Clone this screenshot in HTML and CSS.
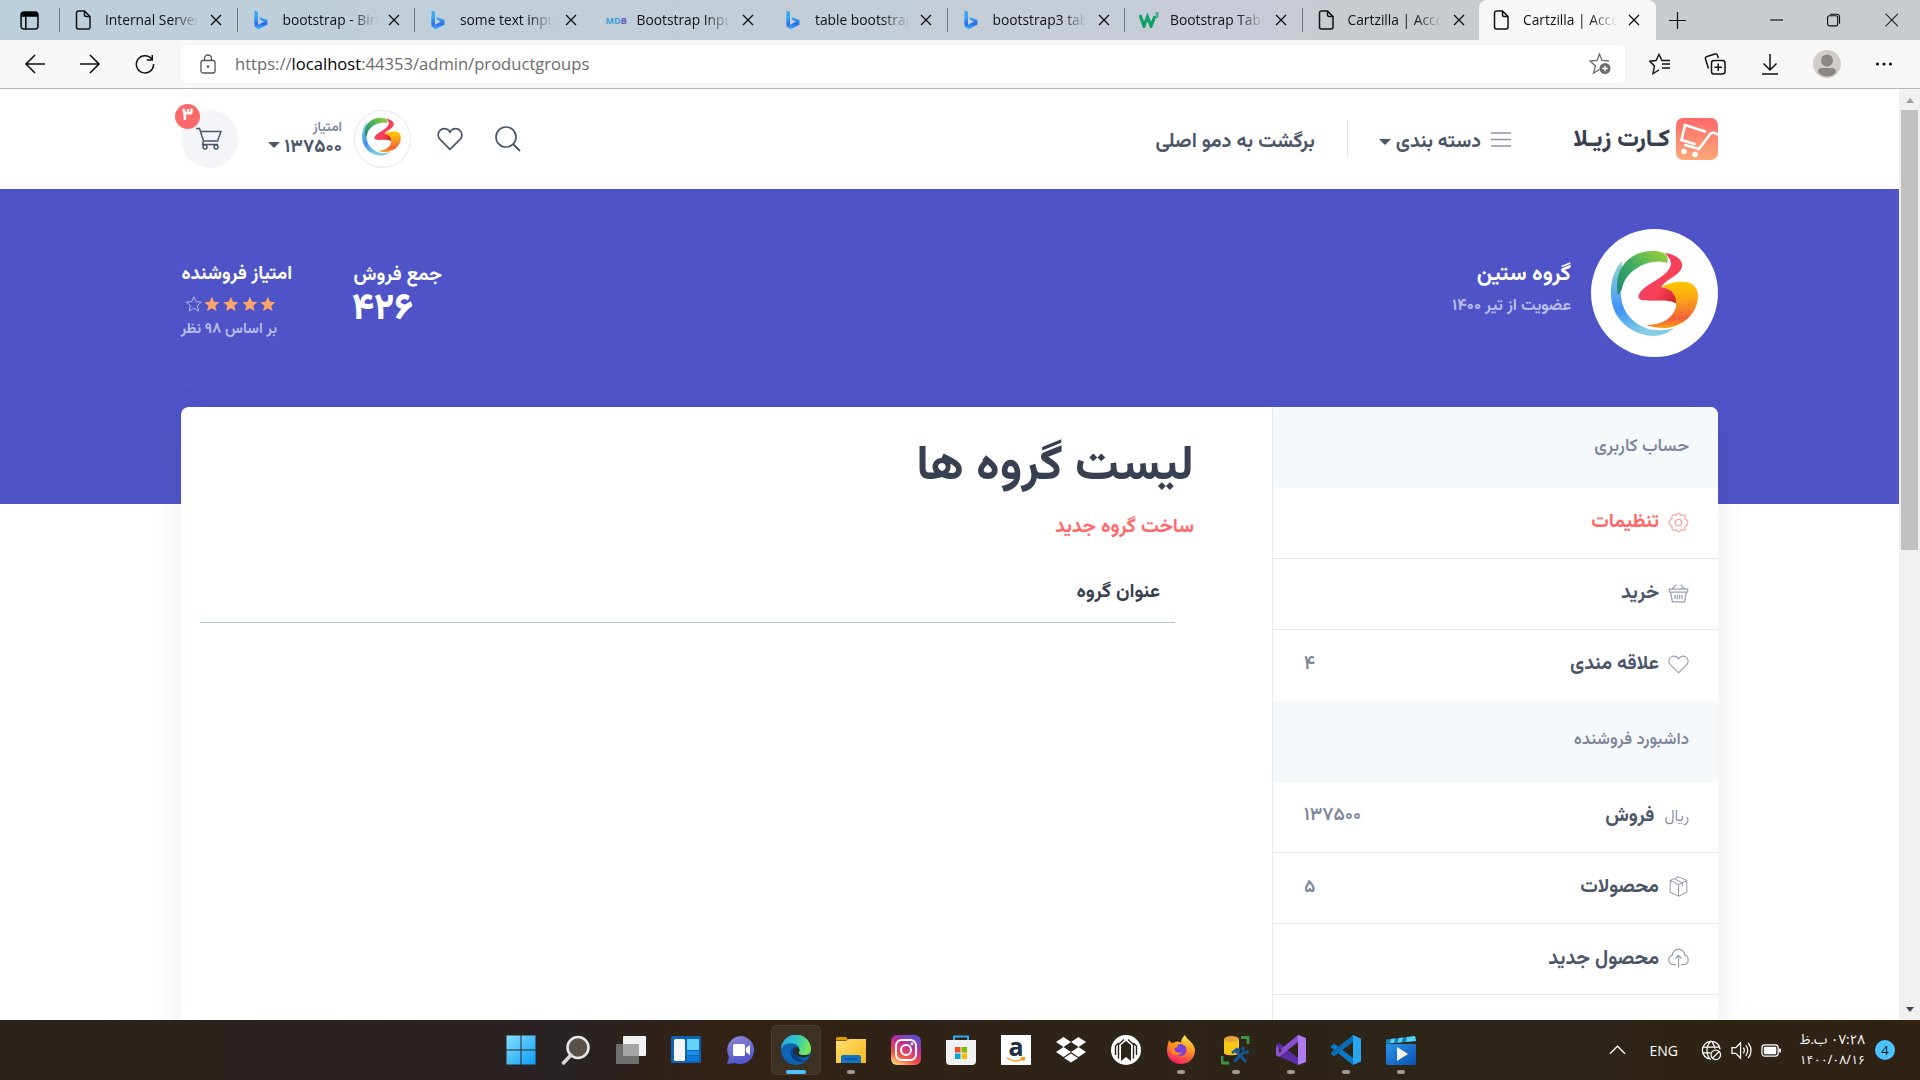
FILE: index.html
```html
<!DOCTYPE html>
<html lang="fa">
<head>
<meta charset="utf-8">
<title>Cartzilla | Account</title>
<link rel="stylesheet" href="styles.css">
</head>
<body>
<svg class="defs" aria-hidden="true">
  <defs>
    <linearGradient id="gb" x1="0" y1="0" x2="0" y2="1"><stop offset="0" stop-color="#35b7f5"/><stop offset=".6" stop-color="#2b6be8"/><stop offset="1" stop-color="#3fc4f7"/></linearGradient>
    <linearGradient id="gblue" x1="0" y1="0" x2=".4" y2="1"><stop offset="0" stop-color="#9ad6d2"/><stop offset=".6" stop-color="#3d93fb"/><stop offset="1" stop-color="#86cfe2"/></linearGradient>
    <linearGradient id="ggreen" x1="1" y1="0" x2="0" y2="1"><stop offset="0" stop-color="#a4d433"/><stop offset=".5" stop-color="#3fae62"/><stop offset="1" stop-color="#1c8474"/></linearGradient>
    <linearGradient id="gred" x1="0" y1="0" x2="1" y2="1"><stop offset="0" stop-color="#e0387a"/><stop offset=".6" stop-color="#fa4157"/><stop offset="1" stop-color="#c1161f"/></linearGradient>
    <linearGradient id="gor" x1=".6" y1="0" x2=".7" y2="1"><stop offset="0" stop-color="#ffc800"/><stop offset=".4" stop-color="#fba318"/><stop offset=".8" stop-color="#f2603a"/><stop offset="1" stop-color="#ffb400"/></linearGradient>
    <linearGradient id="gcart" x1="0" y1="0" x2="0" y2="1"><stop offset="0" stop-color="#fe696a"/><stop offset="1" stop-color="#fea979"/></linearGradient>
    <linearGradient id="gwin" x1="0" y1="0" x2="1" y2="1"><stop offset="0" stop-color="#86e2ff"/><stop offset="1" stop-color="#0a9bf7"/></linearGradient>
    <linearGradient id="gins" x1=".2" y1="1" x2=".7" y2="0"><stop offset="0" stop-color="#fed373"/><stop offset=".3" stop-color="#f15245"/><stop offset=".65" stop-color="#c12f92"/><stop offset="1" stop-color="#5a4fd0"/></linearGradient>
    <linearGradient id="gchat" x1="0" y1="0" x2=".3" y2="1"><stop offset="0" stop-color="#8f86d8"/><stop offset="1" stop-color="#5059c9"/></linearGradient>
    <linearGradient id="gedge" x1="0" y1="0" x2="1" y2=".3"><stop offset="0" stop-color="#2aa6e0"/><stop offset=".5" stop-color="#2cc3d0"/><stop offset="1" stop-color="#6fe85a"/></linearGradient>
    <linearGradient id="gff" x1=".7" y1="0" x2=".3" y2="1"><stop offset="0" stop-color="#fff04a"/><stop offset=".4" stop-color="#ff9a22"/><stop offset="1" stop-color="#f5156c"/></linearGradient>
    <linearGradient id="gmov" x1="0" y1="0" x2="1" y2="1"><stop offset="0" stop-color="#2a95e6"/><stop offset="1" stop-color="#0a50b5"/></linearGradient>
    <linearGradient id="gfold" x1="0" y1="0" x2="1" y2="1"><stop offset="0" stop-color="#ffdf72"/><stop offset="1" stop-color="#f7b81b"/></linearGradient>
  </defs>
  <symbol id="page-i" viewBox="0 0 16 20"><path d="M3.500 1h6L15 6.500V17a2 2 0 0 1-2 2H3.500a2 2 0 0 1-2-2V3a2 2 0 0 1 2-2zM9.500 1v4a1.500 1.500 0 0 0 1.500 1.500h4" fill="none" stroke="#111" stroke-width="1.500"/></symbol>
  <symbol id="bing" viewBox="0 0 14 20"><path d="M.5.5 4 2v14.500L.5 14z" fill="#36a5f5"/><path d="M.5 6 4 7v8l6-3.500L6.500 10 5.300 7 13.500 10v4.500L4.500 19.500.5 16.500z" fill="url(#gb)"/></symbol>
  <symbol id="x" viewBox="0 0 12 12"><path d="M1 1l10 10M11 1 1 11" fill="none" stroke="currentColor" stroke-width="1.300"/></symbol>
  <symbol id="heart" viewBox="0 0 24 24"><path d="M12 21.500 3 12.500A6 6 0 0 1 1 8.500C1 5 3.500 2.500 6.700 2.500c2.200 0 4.200 1.200 5.300 3.300 1.100-2.100 3.100-3.300 5.300-3.300C20.500 2.500 23 5 23 8.500c0 1.500-.7 2.900-2 4z" fill="none" stroke="currentColor" stroke-width="var(--sw,1.600)" stroke-linejoin="round"/></symbol>
  <symbol id="star" viewBox="0 0 16 16"><path d="M8 .5l2.200 5.100 5.500.5-4.200 3.600 1.300 5.500L8 12.300l-4.800 2.900 1.300-5.500L.3 6.100l5.500-.5z"/></symbol>
  <symbol id="brand3" viewBox="0 0 127 128">
    <path d="M31 32C18 46 16 72 27 88c9 14 30 23 46 17 5-2 8-4 10-6-10 3-21 3-28 0C39 93 28 79 30 58z" fill="url(#gblue)"/>
    <path d="M27 66C22 40 38 22 62 22c7 0 12 2 14 5 1 2 1 5 0 7C61 28 34 40 31 60z" fill="url(#ggreen)"/>
    <path d="M74 24c9 1 18 6 17 13-1 9-13 11-21 21 8 1 15 5 16 12v5C78 69 59 73 51 71c-5-1-4-5-1-9C60 52 78 47 80 35c0-4-3-8-6-11z" fill="url(#gred)"/>
    <path d="M70 58c8-4 15-6 23-5 9 0 14 6 14 14 0 16-14 31-33 32-8 0-14-1-19-3 14 0 26-5 30-18 1-11-3-18-15-20z" fill="url(#gor)"/>
  </symbol>
</svg>

<div class="tabs">
  <svg class="tabmenu" viewBox="0 0 18 18"><path d="M3.500 1h11A2.500 2.500 0 0 1 17 3.500v11a2.500 2.500 0 0 1-2.500 2.500h-11A2.500 2.500 0 0 1 1 14.500v-11A2.500 2.500 0 0 1 3.500 1zM5.500 5v12" fill="none" stroke="#111" stroke-width="1.500"/><path d="M1 5.500V3.500A2.500 2.500 0 0 1 3.500 1h11A2.500 2.500 0 0 1 17 3.500v2z"/></svg>
  <div class="tab sep"><svg class="fav"><use href="#page-i"/></svg><span>Internal Server Error</span><svg class="cl"><use href="#x"/></svg></div>
  <div class="tab sep"><svg class="fav"><use href="#bing"/></svg><span>bootstrap - Bing</span><svg class="cl"><use href="#x"/></svg></div>
  <div class="tab sep"><svg class="fav"><use href="#bing"/></svg><span>some text inputs</span><svg class="cl"><use href="#x"/></svg></div>
  <div class="tab"><b class="mdb">MD<i>B</i></b><span>Bootstrap Inputs</span><svg class="cl"><use href="#x"/></svg></div>
  <div class="tab"><svg class="fav"><use href="#bing"/></svg><span>table bootstrap</span><svg class="cl"><use href="#x"/></svg></div>
  <div class="tab sep"><svg class="fav"><use href="#bing"/></svg><span>bootstrap3 table</span><svg class="cl"><use href="#x"/></svg></div>
  <div class="tab sep"><svg class="w3" viewBox="0 0 20 16"><path d="M1 3l4 11L8.500 5 12 14l4-10" fill="none" stroke="#12a06e" stroke-width="3.200"/><path d="M16 1h3l-1.500 2c2 0 2 3-1.500 2.500" fill="none" stroke="#12a06e" stroke-width="1.200"/></svg><span>Bootstrap Tables</span><svg class="cl"><use href="#x"/></svg></div>
  <div class="tab sep"><svg class="fav"><use href="#page-i"/></svg><span>Cartzilla | Account</span><svg class="cl"><use href="#x"/></svg></div>
  <div class="tab active"><svg class="fav"><use href="#page-i"/></svg><span>Cartzilla | Account</span><svg class="cl"><use href="#x"/></svg></div>
  <svg class="plus" viewBox="0 0 18 18"><path d="M9 0v18M0 9h18" stroke="#111" stroke-width="1.300"/></svg>
  <div class="winctl">
    <svg viewBox="0 0 14 14"><path d="M0 7h14" stroke="#111" stroke-width="1.200"/></svg>
    <svg viewBox="0 0 14 14"><rect x=".6" y="2.600" width="10.500" height="10.500" rx="2" fill="none" stroke="#111" stroke-width="1.200"/><path d="M3 1h7a3 3 0 0 1 3 3v7" fill="none" stroke="#111" stroke-width="1.200"/></svg>
    <svg viewBox="0 0 14 14"><path d="M.5.5l13 13M13.500.5l-13 13" stroke="#222" stroke-width="1.100"/></svg>
  </div>
</div>

<div class="toolbar">
  <svg class="nav" viewBox="0 0 22 20"><path d="M21 10H2M11 1 2 10l9 9" fill="none" stroke="#111" stroke-width="1.600"/></svg>
  <svg class="nav" viewBox="0 0 22 20"><path d="M1 10h19M11 1l9 9-9 9" fill="none" stroke="#111" stroke-width="1.600"/></svg>
  <svg class="nav" viewBox="0 0 22 22"><path d="M18.500 5.500A9.500 9.500 0 1 0 20.500 11M19 1v5.500h-6" fill="none" stroke="#111" stroke-width="1.600"/></svg>
  <div class="address">
    <svg class="lock" viewBox="0 0 16 20"><rect x="1" y="6.500" width="14" height="12.500" rx="2" fill="none" stroke="#555" stroke-width="1.300"/><path d="M4.500 6.500V4.500a3.500 3.500 0 0 1 7 0v2" fill="none" stroke="#555" stroke-width="1.300"/><circle cx="8" cy="12.500" r="1.300" fill="#555"/></svg>
    <span class="url">https://<b>localhost</b>:44353/admin/productgroups</span>
    <svg class="addfav" viewBox="0 0 22 22"><path d="M20 8l-7-.5L10.500 1 8 7.500 1 8l5.500 5L4.500 20l6-3.500" fill="none" stroke="#6b6b6b" stroke-width="1.300"/><circle cx="16" cy="15.500" r="5.500" fill="#6b6b6b"/><path d="M16 12.700v5.600M13.200 15.500h5.600" stroke="#fff" stroke-width="1.300"/></svg>
  </div>
  <div class="tools">
    <svg viewBox="0 0 22 22"><path d="M14 7.500h-1L10 1.500 7 7.500.8 8.200 5.500 13 4 20.500l6-3.500M13 11h8M13 15h8M14 7.500h7" fill="none" stroke="#111" stroke-width="1.400"/></svg>
    <svg viewBox="0 0 22 22"><rect x="7.500" y="7.500" width="13.500" height="13.500" rx="2.500" fill="none" stroke="#111" stroke-width="1.500"/><path d="M14.200 10.500v7.500M10.500 14.200H18M4.500 15.500 1.500 6A2 2 0 0 1 3 3.500l8-2.500a2 2 0 0 1 2.500 1.500l1 2.500" fill="none" stroke="#111" stroke-width="1.500"/></svg>
    <svg viewBox="0 0 22 22"><path d="M11 1v16M4.500 10.500 11 17l6.500-6.500M3 21h16" fill="none" stroke="#111" stroke-width="1.500"/></svg>
    <svg class="prof" viewBox="0 0 28 28"><circle cx="14" cy="14" r="14" fill="#d0cdc9"/><circle cx="14" cy="10.500" r="6" fill="#8d8783"/><path d="M5 22c0-5 4-4 9-4s9-1 9 4c-4 6-14 6-18 0z" fill="#8d8783"/></svg>
    <svg viewBox="0 0 22 22"><g fill="#111"><circle cx="4.500" cy="11" r="1.600"/><circle cx="11" cy="11" r="1.600"/><circle cx="17.500" cy="11" r="1.600"/></g></svg>
  </div>
</div>

<div class="viewport">
  <div class="site" dir="rtl">
    <header class="bar">
      <div class="logo">
        <svg class="logomark" viewBox="0 0 42 42"><rect width="42" height="42" rx="7" fill="url(#gcart)"/><path d="M29 13.500 9 7 5.500 22l13 4M42 17c-5-4-8-2-10 2l-9 12-14-4" fill="none" stroke="#fff" stroke-width="2.600" stroke-linejoin="round" stroke-linecap="round"/><circle cx="8" cy="33.500" r="2.800" fill="#fff"/><circle cx="19" cy="36.500" r="2.800" fill="#fff"/></svg>
        <span>کـارت زیـلا</span>
      </div>
      <a class="cats"><svg viewBox="0 0 20 15"><path d="M0 1h20M0 7.500h20M0 14h20" stroke="#8f93a8" stroke-width="1.700"/></svg><span>دسته بندی</span><i class="caret"></i></a>
      <a class="back"><span>برگشت به دمو اصلی</span></a>
      <div class="acts">
        <svg class="search" viewBox="0 0 26 26"><circle cx="11" cy="11" r="10" fill="none" stroke="#4b566b" stroke-width="1.700"/><path d="M18 18l7 7" stroke="#4b566b" stroke-width="2"/></svg>
        <svg class="wish"><use href="#heart"/></svg>
        <span class="ava"><svg><use href="#brand3"/></svg></span>
        <div class="score"><small>امتیاز</small><div>۱۳۷۵۰۰ <i class="caret"></i></div></div>
        <div class="cart"><svg viewBox="0 0 26 24"><path d="M0 1.500h3.500L7.500 14h14l3.500-9.500H4.500M7.500 14l-1 3.500h15.500" fill="none" stroke="#4b566b" stroke-width="1.500"/><circle cx="9" cy="20" r="2" fill="none" stroke="#4b566b" stroke-width="1.500"/><circle cx="20" cy="20" r="2" fill="none" stroke="#4b566b" stroke-width="1.500"/></svg><b>۳</b></div>
      </div>
    </header>
    <section class="hero">
      <span class="bigava"><svg><use href="#brand3"/></svg></span>
      <div class="who"><h3>گروه ستین</h3><p>عضویت از تیر ۱۴۰۰</p></div>
      <div class="sales"><h4>جمع فروش</h4><strong>۴۲۶</strong></div>
      <div class="rate"><h4>امتیاز فروشنده</h4>
        <div class="stars"><svg><use href="#star"/></svg><svg><use href="#star"/></svg><svg><use href="#star"/></svg><svg><use href="#star"/></svg><svg class="off"><use href="#star"/></svg></div>
        <p>بر اساس ۹۸ نظر</p></div>
    </section>
    <main class="card">
      <aside>
        <h5>حساب کاربری</h5>
        <a class="on"><svg viewBox="0 0 24 24"><path d="M12 1.200c1.300 0 2 .6 2.300 2.300 1.500.2 2.800-1 4.300.2 1.200 1 1.400 1.700.7 3.600.8 1.200 3.300 1.500 3.500 4.700-.2 3.200-2.700 3.500-3.500 4.700.7 1.900.5 2.600-.7 3.600-1.500 1.200-2.800 0-4.300.2-.3 1.700-1 2.300-2.300 2.300s-2-.6-2.300-2.300c-1.500-.2-2.800 1-4.300-.2-1.200-1-1.400-1.700-.7-3.600C3.900 15.500 1.400 15.200 1.200 12c.2-3.200 2.700-3.500 3.500-4.700-.7-1.900-.5-2.600.7-3.600 1.500-1.200 2.800 0 4.300-.2.300-1.700 1-2.300 2.300-2.300z" fill="none" stroke="currentColor" stroke-width="1.400"/><circle cx="12" cy="12" r="3.700" fill="none" stroke="currentColor" stroke-width="1.400"/></svg><span>تنظیمات</span></a>
        <a><svg viewBox="0 0 24 24"><path d="M1.500 7h21v3.500h-21zM3 10.500l2 11h14l2-11M4.500 7 9.500 2M19.500 7l-5-5M8 13.500v5M10.700 13.500v5M13.300 13.500v5M16 13.500v5" fill="none" stroke="currentColor" stroke-width="1.400"/></svg><span>خرید</span></a>
        <a><svg class="thin"><use href="#heart"/></svg><span>علاقه مندی</span><em>۴</em></a>
        <h5 class="seller">داشبورد فروشنده</h5>
        <a><i class="rial">ریال</i><span>فروش</span><em>۱۳۷۵۰۰</em></a>
        <a><svg viewBox="0 0 24 24"><path d="M12 1l9.500 4v13.500L12 23l-9.500-4.500V5zM2.500 5 12 10l9.500-5M12 10v13M7 3l9.500 5v4" fill="none" stroke="currentColor" stroke-width="1.200"/></svg><span>محصولات</span><em>۵</em></a>
        <a><svg viewBox="0 0 24 24"><path d="M9 19H6.500A5.500 5.500 0 0 1 5 8.200 7 7 0 0 1 19 8.200 5.500 5.500 0 0 1 17.500 19H15M12 22V8.500M8.500 12 12 8.500l3.500 3.500" fill="none" stroke="currentColor" stroke-width="1.400"/></svg><span class="new">محصول جدید</span></a>
        <a></a>
      </aside>
      <section class="content">
        <h1>لیست گروه ها</h1>
        <a class="create">ساخت گروه جدید</a>
        <div class="thead">عنوان گروه</div>
      </section>
    </main>
  </div>
  <div class="scroll"><i class="up"></i><b></b><i class="down"></i></div>
</div>

<div class="taskbar">
  <div class="apps">
    <span><svg viewBox="0 0 30 30"><path d="M.5.500h14v14H.5zM15.500.500h14v14h-14zM.5 15.500h14v14H.5zM15.500 15.500h14v14h-14z" fill="url(#gwin)"/></svg></span>
    <span><svg viewBox="0 0 30 30"><circle cx="17" cy="12.500" r="10.500" fill="#57504b" stroke="#e8e8e8" stroke-width="2.600"/><path d="M10 20l-7.500 8" stroke="#d8d8d8" stroke-width="3.500" stroke-linecap="round"/></svg></span>
    <span><svg viewBox="0 0 30 30"><rect x="7" y="1" width="23" height="20" rx="1" fill="#f2f2f2"/><rect x="0" y="9" width="23" height="20" rx="1" fill="#6e6e6e"/><path d="M7 9h16v12H7z" fill="#a5a5a5"/></svg></span>
    <span><svg viewBox="0 0 30 30"><rect y="1" width="30" height="27" rx="1.500" fill="#0f62b0"/><rect x="3" y="4" width="11" height="22" rx="1.500" fill="#f4f4f4"/><path d="M16 4h12v11H16z" fill="#62d2fb"/><path d="M16 16h12v4H16z" fill="#1590ee"/><path d="M16 21h12v5H16z" fill="#0c78dd"/></svg></span>
    <span><svg viewBox="0 0 30 30"><path d="M15 1a14 14 0 1 1-6 27L1 29l2-7A14 14 0 0 1 15 1z" fill="url(#gchat)"/><rect x="7" y="9" width="12" height="12" rx="1.500" fill="#fff"/><path d="M20 13l4-3v10l-4-3z" fill="#fff"/></svg></span>
    <span class="cur"><svg viewBox="0 0 30 30"><circle cx="15" cy="15" r="15" fill="#0d63b4"/><path d="M0 15A15 15 0 0 1 30 14c0 6-5 7-10 6-2-.5-3-1-2-3 1-3 0-7-4-8C7 7 1 10 0 15z" fill="url(#gedge)"/><path d="M13 12c-5 2-4 11 2 14 5 2 10 1 13-2-3 2-9 1-12-3-3-3-3-6-1-9z" fill="#0a3f86"/><path d="M15 12c-4 3-2 9 4 10 4 1 7 0 10-2-3-1-7 1-10-.5-2-1-1-2-.5-3.500.3-2-1-4-3.500-4z" fill="#2b2a25"/></svg></span>
    <span class="run"><svg viewBox="0 0 30 30"><path d="M0 3.500A1.500 1.500 0 0 1 1.500 2H10l3 3.500H0z" fill="#dd9a06"/><path d="M0 6h10l3-2h17v24H0z" fill="url(#gfold)"/><path d="M5 28v-6a2 2 0 0 1 2-2h16a2 2 0 0 1 2 2v6z" fill="#1474c4"/><path d="M9 24h12" stroke="#0b4f92" stroke-width="1.500"/></svg></span>
    <span><svg viewBox="0 0 30 30"><rect width="30" height="30" rx="6" fill="url(#gins)"/><rect x="5" y="5" width="20" height="20" rx="5.500" fill="none" stroke="#fff" stroke-width="2"/><circle cx="15" cy="15" r="5" fill="none" stroke="#fff" stroke-width="2"/><circle cx="21" cy="9" r="1.400" fill="#fff"/></svg></span>
    <span><svg viewBox="0 0 30 30"><path d="M8 6V1.500h14V6" fill="none" stroke="#28b1ee" stroke-width="2"/><path d="M0 5h30v21a4 4 0 0 1-4 4H4a4 4 0 0 1-4-4z" fill="#f1f1f1"/><path d="M9 12h5.500v5.500H9z" fill="#f25022"/><path d="M15.500 12H21v5.500h-5.500z" fill="#7fba00"/><path d="M9 18.500h5.500V24H9z" fill="#00a4ef"/><path d="M15.500 18.500H21V24h-5.500z" fill="#ffb900"/></svg></span>
    <span class="amz"><b>a</b><svg viewBox="0 0 20 6"><path d="M1 1q9 6 17 0M15 .7l3.500-.2-.8 3.200" fill="none" stroke="#f90" stroke-width="1.500"/></svg></span>
    <span><svg viewBox="0 0 30 30"><g fill="#fff"><path d="M7.500 2 15 7l-7.500 5L0 7zM22.500 2 30 7l-7.500 5L15 7zM7.500 12l7.500 5-7.500 5L0 17zM22.500 12l7.500 5-7.500 5-7.500-5zM15 18.500l7 4.500-7 4.500L8 23z"/></g></svg></span>
    <span><svg viewBox="0 0 30 30"><circle cx="15" cy="15" r="15" fill="#fff"/><path d="M10 26V10l5-4 5 4v16l-5-4z" fill="#2e2318"/><path d="M7.500 23.500V9.500L13 4.500M22.500 23.500V9.500L17 4.500M4.500 20v-9l3-3M25.500 20v-9l-3-3" fill="none" stroke="#2e2318" stroke-width="1.400"/></svg></span>
    <span class="run"><svg viewBox="0 0 30 30"><path d="M3 5c1 2 2 3 4 3 3-2 6-2 8 0 0-4 2-6 4-8 1 4 9 7 10 15 0 8-6 14-14 14S1 23 1 16c0-4 1-8 2-11z" fill="url(#gff)"/><circle cx="14.500" cy="15" r="6" fill="#7a42d8"/><path d="M3 10c3-2 6-1 9 0 1 1-1 3-4 3 0 3 3 6 8 4-3 5-10 3-11 0z" fill="#ff8a1f"/></svg></span>
    <span class="run"><svg viewBox="0 0 30 30"><path d="M3 4v14c0 3 15 3 15 0V4z" fill="#f5c518"/><ellipse cx="10.500" cy="4" rx="7.500" ry="3" fill="#e8a33a"/><path d="M20 2.500h7V9M1 21v7h7" fill="none" stroke="#3f9443" stroke-width="2.800"/><path d="M13 27l11-11M14 15l11 12" fill="none" stroke="#12579b" stroke-width="2.800"/><path d="M11 18l5-4 3 2M21 15l2-3M24 18l4-2" fill="none" stroke="#12579b" stroke-width="2.600"/></svg></span>
    <span class="run"><svg viewBox="0 0 30 30"><path d="M0 10l3-2 19 15V30L0 20z" fill="#5b2ea6"/><path d="M5 15 0 11v9zM0 20l3 2L22 7V0L0 18z" fill="#8a4fd0"/><path d="M22 0l8 3v24l-8 3z" fill="#b07cf0"/><path d="M3 13v5l3-2.500z" fill="#2e2618"/></svg></span>
    <span class="run"><svg viewBox="0 0 30 30"><path d="M0 11l3-2.500L22 23v7L0 12.500z" fill="#0a7ac8"/><path d="M0 19l3 2.500L22 7V0L0 17.500z" fill="#0b6cb4"/><path d="M22 0l8 3.500v23L22 30z" fill="#27a5f0"/></svg></span>
    <span class="run"><svg viewBox="0 0 30 30"><path d="M0 9h30v19a2 2 0 0 1-2 2H2a2 2 0 0 1-2-2z" fill="url(#gmov)"/><path d="M0 4.500 29 1l1 5L0 9z" fill="#1b7fb8"/><path d="M5 4l4-.5L8 8H4zM13 3l4-.5-1.500 5h-4zM21 2l8-1 1 5-10 1z" fill="#52d0f5"/><path d="M11 12l11 7-11 7z" fill="#f5f5f5"/></svg></span>
  </div>
  <div class="tray">
    <svg class="chev" viewBox="0 0 18 10"><path d="M1 9l8-8 8 8" fill="none" stroke="#fff" stroke-width="1.300"/></svg>
    <span class="eng">ENG</span>
    <svg viewBox="0 0 22 22"><g fill="none" stroke="#fff" stroke-width="1.300"><path d="M20 10A9.300 9.300 0 1 0 10.500 20M2 7.500h17M2 13.500h8M10.500 1C5 6 5 15 9.500 20M10.500 1c2.500 2 3.500 5 4 8"/><circle cx="15.500" cy="15.500" r="5"/><path d="M12 19l7-7"/></g></svg>
    <svg viewBox="0 0 22 22"><path d="M1 8h4l5-5v16l-5-5H1zM13 8q2 3 0 6M15.500 5.500q4 5.500 0 11M18 3q6 8 0 16" fill="none" stroke="#fff" stroke-width="1.300"/></svg>
    <svg viewBox="0 0 22 22"><rect x="1" y="5" width="17" height="12" rx="3" fill="none" stroke="#fff" stroke-width="1.300"/><rect x="3" y="7" width="13" height="8" rx="1" fill="#fff"/><path d="M20 9v4" stroke="#fff" stroke-width="2"/></svg>
    <div class="clock" dir="rtl"><div>۰۷:۲۸ ب.ظ</div><div class="date"><bdo dir="ltr">۱۴۰۰/۰۸/۱۶</bdo></div></div>
    <span class="note">4</span>
  </div>
</div>
</body>
</html>
```
FILE: styles.css
```css
*{box-sizing:border-box}
body{margin:0;width:1920px;height:1080px;overflow:hidden;display:flex;flex-direction:column;background:#fff;font-family:"Open Sans","Noto Sans",sans-serif}
svg{display:block;flex:none}
.defs{position:absolute;width:0;height:0}
h1,h3,h4,h5,p{margin:0}
i,em{font-style:normal}

.tabs{height:40px;flex:none;display:flex;align-items:center;background:linear-gradient(90deg,#bccfdc 0,#c4ced6 45%,#c8ccd6 66%,#c7ccd0 70%,#c8cccf);font-size:14px;color:#111}
.tabmenu{width:19px;height:19px;margin:0 20px 0 20px}
.tab{width:177.500px;height:40px;display:flex;align-items:center;padding-left:16px;position:relative}
.tab.sep::before{content:"";position:absolute;left:0;top:8px;width:1px;height:24px;background:#70777c}
.tab.active{width:177px;background:#f7f7f7;border-radius:8px 8px 0 0;padding-left:14px}
.fav{width:16px;height:20px;margin-right:14px}
.w3{width:20px;height:16px;margin-right:11px;margin-left:-1px}
.mdb{width:22px;margin:0 9px 0 -2px;font-size:9px;color:#3b9fdd}
.mdb i{color:#6a55c4}
.tab span{width:96px;white-space:nowrap;overflow:hidden;font-size:13.800px;margin-top:-1px;-webkit-mask:linear-gradient(90deg,#000 70%,transparent 98%);mask:linear-gradient(90deg,#000 70%,transparent 98%)}
.cl{width:12px;height:12px;margin-left:9px}
.plus{width:17px;height:17px;margin-left:13px}
.winctl{display:flex;margin-left:auto;gap:44px;margin-right:22px}
.winctl svg{width:13.500px;height:14px}

.toolbar{height:49px;flex:none;display:flex;align-items:center;background:#f7f7f7;border-bottom:1px solid #b9b9b9;padding-left:24px}
.nav{width:22px;height:20px;margin-right:33px}
.address{width:1445px;height:38px;margin-left:-9px;background:#fff;border-radius:5px;display:flex;align-items:center;padding:0 14px 0 20px;box-shadow:0 0 3px rgba(0,0,0,.05)}
.lock{width:16px;height:20px}
.url{margin:-2px 0 0 19px;font-size:16.600px;color:#6c6c6c}
.url b{font-weight:400;color:#000}
.addfav{width:22px;height:22px;margin-left:auto}
.tools{display:flex;align-items:center;margin-left:24px;gap:33px}
.tools svg{width:22px;height:22px}
.tools .prof{width:28px;height:28px;margin:0 -1px}

.viewport{height:931px;flex:none;display:flex;overflow:hidden}
.site{width:1899px;padding:0 181px;background:linear-gradient(#fff 100px,#4e54c8 100px,#4e54c8 415px,#fff 415px);font-family:Vazirmatn,"DejaVu Sans",sans-serif;font-weight:700;color:#4b566b;line-height:1.2}
.bar{height:100px;display:flex;align-items:center}
.logo{display:flex;align-items:center;gap:6px;width:165px;color:#373f50}
.logo span{font-size:24px;font-weight:800;white-space:nowrap;line-height:34px;margin-top:2px}
.logomark{width:42px;height:42px}
.cats{display:flex;align-items:center;margin-right:42px;font-size:19.500px}
.cats svg{width:20px;height:15px;margin-left:10px}
.cats span{line-height:30px;margin-top:6px}
.caret{border:6px solid transparent;border-top-color:#4b566b;border-bottom:0;display:inline-block}
.cats .caret{margin-right:5px;margin-top:5px}
.back{height:38px;margin-right:31px;padding-right:32px;border-right:1px solid #e3e9ef;font-size:19.900px}
.back span{display:block;line-height:38px;padding-top:4px}
.acts{margin-right:auto;display:flex;align-items:center}
.search{width:26px;height:26px}
.wish{width:26px;height:26px;margin-right:32px}
.ava{width:57px;height:58px;border:1px solid #e3e9ef;border-radius:50%;margin-right:26px}
.ava svg{width:57px;height:57px;margin-top:-3px}
.score{margin-right:12px;width:75px;display:flex;flex-direction:column;padding-bottom:2px}
.score small{font-size:13.700px;font-weight:600;line-height:18px;color:#7d879c}
.score div{font-size:18.600px;line-height:21px;white-space:nowrap}
.score .caret{vertical-align:4px}
.cart{margin-right:29px;width:57px;height:58px;border-radius:50%;background:#f3f5f9;position:relative;display:grid;place-items:center}
.cart svg{width:26px;height:24px;margin-right:1px}
.cart b{position:absolute;left:-6px;top:-6px;width:25px;height:25px;border-radius:50%;background:#fe696a;color:#fff;text-align:center;font-size:17px;line-height:25px}

.hero{height:218px;padding-top:40px;display:flex;align-items:flex-start;color:#fff}
.bigava{width:127px;height:128px;border-radius:50%;background:#fff}
.bigava svg{width:127px;height:128px}
.who{margin:30px 20px 0 0;white-space:nowrap}
.who h3{font-size:21.800px;line-height:32px}
.who p{font-size:16.100px;line-height:26px;margin-top:2px;color:#b8bbe9}
.hero h4{font-size:19.100px;line-height:30px;white-space:nowrap;padding-top:1px}
.sales{width:90px;margin:30px auto 0 60px}
.sales strong{display:block;direction:ltr;text-align:left;font-size:37px;line-height:40px;font-weight:800}
.rate{width:111px;margin-top:30px}
.rate h4{font-size:18.800px}
.stars{display:flex;gap:3px;width:91px;margin:6px 16px 0 0}
.stars svg{width:15.700px;height:16px;fill:#fea569}
.stars .off{fill:none;stroke:#b8bbe9;stroke-width:1;overflow:visible}
.rate p{font-size:14.900px;line-height:20px;margin:8px 15px 0 0;white-space:nowrap;color:#b8bbe9}

.card{display:flex;height:640px;background:#fff;border-radius:8px;box-shadow:0 6px 36px -4px rgba(43,52,69,.12);overflow:hidden}
aside{width:446px;border-left:1px solid #e3e9ef}
h5{height:81px;background:#f6f9fc;padding:0 29px;font-size:17.500px;font-weight:600;color:#7d879c;line-height:79px}
.seller{font-size:16.900px}
aside a{height:71.200px;border-top:1px solid #e3e9ef;display:flex;align-items:center;padding:0 29px 2px 31px;font-size:19.600px}
aside h5+a{height:70.200px;border-top:0}
aside svg{width:21px;height:21px;margin-left:9px;color:#9aa0b4}
aside span{margin-top:2px;line-height:32px}
.new{font-size:20px}
aside em{margin-right:auto;color:#7d879c;font-size:18.700px;font-weight:600;padding-top:2px}
aside .on{color:#fe696a}
.on svg{color:#fea0a1}
.thin{--sw:1.300}
.rial{font-size:16px;font-weight:300;color:#7d879c;margin-left:10px;padding-top:3px}
.content{flex:1;padding:29px 78px 0 19px}
h1{font-size:48.600px;line-height:62px;color:#373f50}
.create{display:block;color:#fe696a;font-size:19.700px;line-height:30px;margin-top:15px}
.thead{margin:18px 19px 0 0;height:62px;border-bottom:1px solid #b5c6d6;padding:15px 15px 0;line-height:32px;font-size:19.400px;color:#373f50}

.scroll{width:21px;background:#f0f0f0;display:flex;flex-direction:column;align-items:center}
.scroll b{width:17px;height:440px;background:#c1c1c1;margin-top:7px}
.up,.down{width:0;height:0;border:4.500px solid transparent}
.up{border-top:0;border-bottom:5px solid #a0a0a0;margin-top:9px}
.down{border-bottom:0;border-top:5px solid #444;margin-top:auto;margin-bottom:8px}

.taskbar{height:60px;flex:none;display:flex;align-items:center;justify-content:space-between;background:linear-gradient(90deg,#2c221c,#2a2323 30%,#342216 37%,#2e2318 55%,#2d2618 80%,#2f2214);padding-left:496px}
.apps{display:flex;gap:5px}
.apps span{width:50px;height:50px;display:grid;place-items:center;position:relative;border-radius:6px}
.apps svg{width:30px;height:30px}
.apps .cur{background:#3d3124;box-shadow:inset 0 0 0 1px #4b3d30}
.cur::after,.run::after{content:"";position:absolute;bottom:1px;left:21px;width:8px;height:4px;border-radius:2px;background:#a09a94}
.apps .cur::after{left:15px;width:20px;background:#4cc2ff}
.apps .amz{width:30px;height:30px;margin:10px;background:#fff;border-radius:0;color:#222f3e}
.amz b{font:700 25px/16px "Open Sans",sans-serif;margin-top:1px}
.apps .amz svg{width:20px;height:6px}
.tray{display:flex;align-items:center;gap:9px;color:#fff;padding-right:25px}
.tray svg{width:21px;height:21px}
.tray .chev{width:17px;height:10px}
.eng{font-size:14px;margin:0 14px 0 15px}
.clock{width:66px;margin:0 1px 0 8px;font:400 13.400px/20px "Noto Sans Arabic","DejaVu Sans",sans-serif;white-space:nowrap}
.date{font-size:12.300px}
.note{width:20px;height:20px;border-radius:50%;background:#4cc2ff;color:#111;font-size:13px;line-height:20px;text-align:center}
```
